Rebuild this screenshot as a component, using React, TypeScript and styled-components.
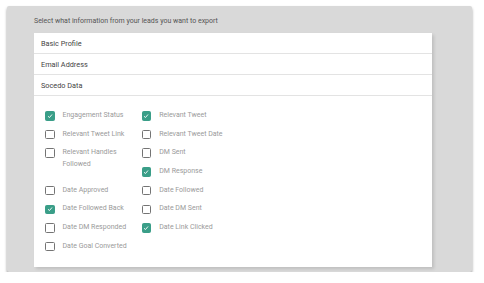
import styled, { createGlobalStyle } from 'styled-components';

const GlobalStyle = createGlobalStyle`
  body {
    margin: 0;
    background: #ffffff;
    font-family: Roboto, 'Liberation Sans', sans-serif;
  }
`;

const Page = styled.div`
  padding: 6px 12px 0 7px;
`;

// grey dialog surface
const Panel = styled.div`
  width: 465px;
  height: 266px;
  box-sizing: border-box;
  padding: 0 40px 0 27px;
  background: #d9d9d9;
  border-radius: 2px;
  box-shadow: 0 2px 3px rgba(0, 0, 0, 0.4);
`;

const Title = styled.div`
  height: 27px;
  padding-top: 2px;
  box-sizing: border-box;
  display: flex;
  align-items: center;
  font-size: 7px;
  color: #555;
`;

const Card = styled.div`
  width: 398px;
  height: 234px;
  background: #fff;
  box-shadow: 2px 2px 3px rgba(0, 0, 0, 0.12);
`;

const Row = styled.div`
  height: 20px;
  display: flex;
  align-items: center;
  padding: 1px 0 0 7px;
  box-sizing: border-box;
  height: 21px;
  border-bottom: 1px solid #e3e3e3;
  font-size: 7.3px;
  color: #444;
`;

const Options = styled.div`
  display: grid;
  grid-template-columns: 96.7px 96.7px;
  grid-auto-rows: 18.7px;
  padding: 10.5px 0 0 11px;
`;

const Option = styled.label<{ $rows?: number }>`
  grid-row: span ${(p) => p.$rows ?? 1};
  display: flex;
  align-items: flex-start;
  gap: 8px;
  padding-top: 3.5px;
  font-size: 7px;
  line-height: 11.7px;
  color: #9a9a9a;
`;

const Box = styled.span<{ $checked: boolean }>`
  flex: none;
  width: 9.5px;
  height: 9.5px;
  margin-top: 1.1px;
  box-sizing: border-box;
  border-radius: 1.5px;
  border: 1.7px solid ${(p) => (p.$checked ? '#3a9e88' : '#747474')};
  background: ${(p) => (p.$checked ? '#3a9e88' : '#fff')};
  display: flex;
  align-items: center;
  justify-content: center;
`;

const Label = styled.span`
  width: 70px;
`;

const options = [
  { label: 'Engagement Status', checked: true },
  { label: 'Relevant Tweet', checked: true },
  { label: 'Relevant Tweet Link', checked: false },
  { label: 'Relevant Tweet Date', checked: false },
  { label: 'Relevant Handles Followed', checked: false, rows: 2 },
  { label: 'DM Sent', checked: false },
  { label: 'DM Response', checked: true },
  { label: 'Date Approved', checked: false },
  { label: 'Date Followed', checked: false },
  { label: 'Date Followed Back', checked: true },
  { label: 'Date DM Sent', checked: false },
  { label: 'Date DM Responded', checked: false },
  { label: 'Date Link Clicked', checked: true },
  { label: 'Date Goal Converted', checked: false },
];

export default function App() {
  return (
    <>
      <GlobalStyle />
      <Page>
        <Panel>
          <Title>Select what information from your leads you want to export</Title>
          <Card>
            <Row>Basic Profile</Row>
            <Row>Email Address</Row>
            <Row>Socedo Data</Row>
            <Options>
              {options.map((o) => (
                <Option key={o.label} $rows={o.rows}>
                  <Box $checked={o.checked}>
                    {o.checked && (
                      <svg width="6" height="6" viewBox="0 0 12 12">
                        <path d="M2 6.5 L5 9 L10 3" fill="none" stroke="#fff" strokeWidth="1.8" />
                      </svg>
                    )}
                  </Box>
                  <Label>{o.label}</Label>
                </Option>
              ))}
            </Options>
          </Card>
        </Panel>
      </Page>
    </>
  );
}
